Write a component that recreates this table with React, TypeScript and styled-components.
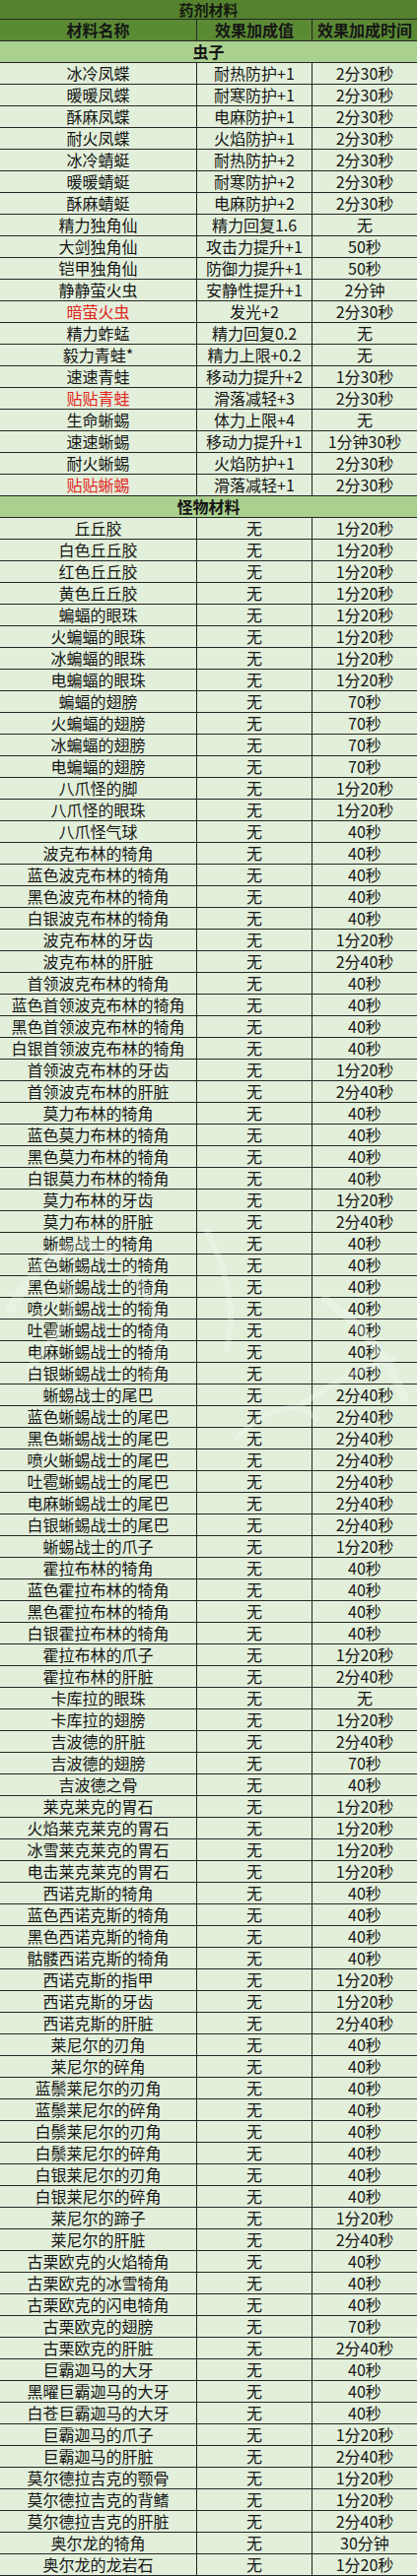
import React from "react";
import styled, { createGlobalStyle } from "styled-components";

const Global = createGlobalStyle`
  html, body { margin: 0; padding: 0; background: #ffffff; }
  body { font-family: "Noto Sans CJK SC", "Noto Sans", sans-serif; }
`;

type Item = [string, string, string, boolean?];

const insects: Item[] = [
  ["冰冷凤蝶", "耐热防护+1", "2分30秒"],
  ["暖暖凤蝶", "耐寒防护+1", "2分30秒"],
  ["酥麻凤蝶", "电麻防护+1", "2分30秒"],
  ["耐火凤蝶", "火焰防护+1", "2分30秒"],
  ["冰冷蜻蜓", "耐热防护+2", "2分30秒"],
  ["暖暖蜻蜓", "耐寒防护+2", "2分30秒"],
  ["酥麻蜻蜓", "电麻防护+2", "2分30秒"],
  ["精力独角仙", "精力回复1.6", "无"],
  ["大剑独角仙", "攻击力提升+1", "50秒"],
  ["铠甲独角仙", "防御力提升+1", "50秒"],
  ["静静萤火虫", "安静性提升+1", "2分钟"],
  ["暗萤火虫", "发光+2", "2分30秒", true],
  ["精力蚱蜢", "精力回复0.2", "无"],
  ["毅力青蛙*", "精力上限+0.2", "无"],
  ["速速青蛙", "移动力提升+2", "1分30秒"],
  ["贴贴青蛙", "滑落减轻+3", "2分30秒", true],
  ["生命蜥蜴", "体力上限+4", "无"],
  ["速速蜥蜴", "移动力提升+1", "1分钟30秒"],
  ["耐火蜥蜴", "火焰防护+1", "2分30秒"],
  ["贴贴蜥蜴", "滑落减轻+1", "2分30秒", true],
];

const monsterRaw: [string, string][] = [
  ["丘丘胶", "1分20秒"],
  ["白色丘丘胶", "1分20秒"],
  ["红色丘丘胶", "1分20秒"],
  ["黄色丘丘胶", "1分20秒"],
  ["蝙蝠的眼珠", "1分20秒"],
  ["火蝙蝠的眼珠", "1分20秒"],
  ["冰蝙蝠的眼珠", "1分20秒"],
  ["电蝙蝠的眼珠", "1分20秒"],
  ["蝙蝠的翅膀", "70秒"],
  ["火蝙蝠的翅膀", "70秒"],
  ["冰蝙蝠的翅膀", "70秒"],
  ["电蝙蝠的翅膀", "70秒"],
  ["八爪怪的脚", "1分20秒"],
  ["八爪怪的眼珠", "1分20秒"],
  ["八爪怪气球", "40秒"],
  ["波克布林的犄角", "40秒"],
  ["蓝色波克布林的犄角", "40秒"],
  ["黑色波克布林的犄角", "40秒"],
  ["白银波克布林的犄角", "40秒"],
  ["波克布林的牙齿", "1分20秒"],
  ["波克布林的肝脏", "2分40秒"],
  ["首领波克布林的犄角", "40秒"],
  ["蓝色首领波克布林的犄角", "40秒"],
  ["黑色首领波克布林的犄角", "40秒"],
  ["白银首领波克布林的犄角", "40秒"],
  ["首领波克布林的牙齿", "1分20秒"],
  ["首领波克布林的肝脏", "2分40秒"],
  ["莫力布林的犄角", "40秒"],
  ["蓝色莫力布林的犄角", "40秒"],
  ["黑色莫力布林的犄角", "40秒"],
  ["白银莫力布林的犄角", "40秒"],
  ["莫力布林的牙齿", "1分20秒"],
  ["莫力布林的肝脏", "2分40秒"],
  ["蜥蜴战士的犄角", "40秒"],
  ["蓝色蜥蜴战士的犄角", "40秒"],
  ["黑色蜥蜴战士的犄角", "40秒"],
  ["喷火蜥蜴战士的犄角", "40秒"],
  ["吐雹蜥蜴战士的犄角", "40秒"],
  ["电麻蜥蜴战士的犄角", "40秒"],
  ["白银蜥蜴战士的犄角", "40秒"],
  ["蜥蜴战士的尾巴", "2分40秒"],
  ["蓝色蜥蜴战士的尾巴", "2分40秒"],
  ["黑色蜥蜴战士的尾巴", "2分40秒"],
  ["喷火蜥蜴战士的尾巴", "2分40秒"],
  ["吐雹蜥蜴战士的尾巴", "2分40秒"],
  ["电麻蜥蜴战士的尾巴", "2分40秒"],
  ["白银蜥蜴战士的尾巴", "2分40秒"],
  ["蜥蜴战士的爪子", "1分20秒"],
  ["霍拉布林的犄角", "40秒"],
  ["蓝色霍拉布林的犄角", "40秒"],
  ["黑色霍拉布林的犄角", "40秒"],
  ["白银霍拉布林的犄角", "40秒"],
  ["霍拉布林的爪子", "1分20秒"],
  ["霍拉布林的肝脏", "2分40秒"],
  ["卡库拉的眼珠", "无"],
  ["卡库拉的翅膀", "1分20秒"],
  ["吉波德的肝脏", "2分40秒"],
  ["吉波德的翅膀", "70秒"],
  ["吉波德之骨", "40秒"],
  ["莱克莱克的胃石", "1分20秒"],
  ["火焰莱克莱克的胃石", "1分20秒"],
  ["冰雪莱克莱克的胃石", "1分20秒"],
  ["电击莱克莱克的胃石", "1分20秒"],
  ["西诺克斯的犄角", "40秒"],
  ["蓝色西诺克斯的犄角", "40秒"],
  ["黑色西诺克斯的犄角", "40秒"],
  ["骷髅西诺克斯的犄角", "40秒"],
  ["西诺克斯的指甲", "1分20秒"],
  ["西诺克斯的牙齿", "1分20秒"],
  ["西诺克斯的肝脏", "2分40秒"],
  ["莱尼尔的刃角", "40秒"],
  ["莱尼尔的碎角", "40秒"],
  ["蓝鬃莱尼尔的刃角", "40秒"],
  ["蓝鬃莱尼尔的碎角", "40秒"],
  ["白鬃莱尼尔的刃角", "40秒"],
  ["白鬃莱尼尔的碎角", "40秒"],
  ["白银莱尼尔的刃角", "40秒"],
  ["白银莱尼尔的碎角", "40秒"],
  ["莱尼尔的蹄子", "1分20秒"],
  ["莱尼尔的肝脏", "2分40秒"],
  ["古栗欧克的火焰犄角", "40秒"],
  ["古栗欧克的冰雪犄角", "40秒"],
  ["古栗欧克的闪电犄角", "40秒"],
  ["古栗欧克的翅膀", "70秒"],
  ["古栗欧克的肝脏", "2分40秒"],
  ["巨霸迦马的大牙", "40秒"],
  ["黑曜巨霸迦马的大牙", "40秒"],
  ["白苍巨霸迦马的大牙", "40秒"],
  ["巨霸迦马的爪子", "1分20秒"],
  ["巨霸迦马的肝脏", "2分40秒"],
  ["莫尔德拉吉克的颚骨", "1分20秒"],
  ["莫尔德拉吉克的背鳍", "1分20秒"],
  ["莫尔德拉吉克的肝脏", "2分40秒"],
  ["奥尔龙的犄角", "30分钟"],
  ["奥尔龙的龙岩石", "1分20秒"],
];

const monsters: Item[] = monsterRaw.map(([n, t]) => [n, "无", t]);

const sections: { title: string; rows: Item[] }[] = [
  { title: "虫子", rows: insects },
  { title: "怪物材料", rows: monsters },
];

const LINE = "#262626";

const Table = styled.div`
  position: relative;
  width: 423px;
  display: flex;
  flex-direction: column;
  font-family: "Noto Sans CJK SC", "Noto Sans", sans-serif;
  color: #161616;
  overflow: hidden;
`;

const TitleBar = styled.div`
  height: 20px;
  box-sizing: border-box;
  padding-top: 1px;
  border-bottom: 1px solid ${LINE};
  background: #55822f;
  display: flex;
  align-items: center;
  justify-content: center;
  font-size: 15px;
  font-weight: 700;
  line-height: 18px;
  color: #141a10;
`;

const Row = styled.div<{ $tone: "head" | "data" }>`
  display: grid;
  grid-template-columns: 200px 117px 106px;
  height: 22px;
  background: ${(p) => (p.$tone === "head" ? "#5a8a34" : "#e2efda")};
`;

const Cell = styled.div<{ $bold?: boolean; $red?: boolean }>`
  box-sizing: border-box;
  border-bottom: 1px solid ${LINE};
  border-right: 1px solid ${LINE};
  display: flex;
  align-items: center;
  justify-content: center;
  font-size: 16px;
  line-height: 21px;
  white-space: nowrap;
  font-weight: ${(p) => (p.$bold ? 700 : 400)};
  color: ${(p) => (p.$red ? "#e3241f" : "#161616")};
  &:last-child {
    border-right: none;
  }
`;

const SectionBar = styled.div`
  height: 22px;
  box-sizing: border-box;
  border-bottom: 1px solid ${LINE};
  background: #a9d08e;
  display: flex;
  align-items: center;
  justify-content: center;
  font-size: 16px;
  font-weight: 700;
  line-height: 21px;
  color: #141414;
`;

const Watermark = styled.svg`
  position: absolute;
  left: 0;
  top: 1130px;
  width: 423px;
  height: 420px;
  pointer-events: none;
  opacity: 0.25;
`;

export default function App() {
  return (
    <>
      <Global />
      <Table>
        <TitleBar>药剂材料</TitleBar>
        <Row $tone="head">
          <Cell $bold>材料名称</Cell>
          <Cell $bold>效果加成值</Cell>
          <Cell $bold>效果加成时间</Cell>
        </Row>
        {sections.map((s) => (
          <React.Fragment key={s.title}>
            <SectionBar>{s.title}</SectionBar>
            {s.rows.map(([name, effect, time, red]) => (
              <Row $tone="data" key={name}>
                <Cell $red={red}>{name}</Cell>
                <Cell>{effect}</Cell>
                <Cell>{time}</Cell>
              </Row>
            ))}
          </React.Fragment>
        ))}
        <Watermark viewBox="0 0 423 420" aria-hidden="true">
          <g fill="none" stroke="#ffffff" strokeLinecap="round">
            <path d="M10 200 C 40 150, 70 120, 110 140" strokeWidth="10" />
            <path d="M30 260 C 60 220, 90 190, 60 170" strokeWidth="7" />
            <path d="M130 160 C 160 190, 170 230, 150 270" strokeWidth="8" />
            <path d="M210 120 C 230 160, 240 200, 230 240" strokeWidth="6" />
            <path d="M330 190 C 360 210, 390 240, 410 290" strokeWidth="9" />
            <path d="M300 300 C 330 280, 360 260, 400 250" strokeWidth="6" />
            <path d="M240 330 C 270 300, 300 290, 320 310" strokeWidth="5" />
          </g>
        </Watermark>
      </Table>
    </>
  );
}
